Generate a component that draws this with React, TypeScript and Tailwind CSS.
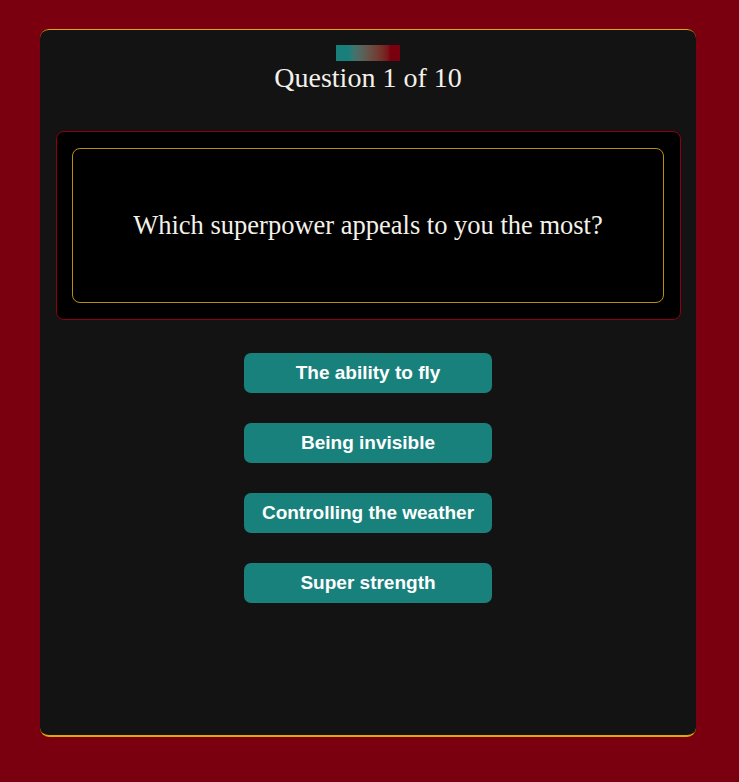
export default function App() {
  const answers = [
    'The ability to fly',
    'Being invisible',
    'Controlling the weather',
    'Super strength',
  ];

  return (
    <div className="min-h-[782px] w-full bg-[#7a0010] pt-[29px] pb-[45px] pl-[40px] pr-[43px]">
      <div className="h-[708px] rounded-[9px] border-t border-b-2 border-[#d9a90f] bg-[#131313] pl-[16px] pr-[15px] pt-[15px]">
        {/* progress + title */}
        <div className="flex flex-col items-center pr-[1px]">
          <div className="h-[16px] w-[64px] bg-gradient-to-r from-[#187f7a] from-20% to-[#7a0010] to-85%" />
          <h1
            className="mt-[1px] text-[28px] leading-[32px] text-[#f4f1ea]"
            style={{ fontFamily: '"Liberation Serif", "DejaVu Serif", serif' }}
          >
            Question 1 of 10
          </h1>
        </div>

        {/* question box */}
        <div className="mt-[37px] rounded-[8px] border border-[#8c0014] bg-black py-[16px] pl-[15px] pr-[16px]">
          <div className="flex h-[155px] items-center justify-center rounded-[8px] border border-[#b8900f]">
            <p
              className="text-[26.5px] text-[#f4f1ea]"
              style={{ fontFamily: '"Liberation Serif", "DejaVu Serif", serif' }}
            >
              Which superpower appeals to you the most?
            </p>
          </div>
        </div>

        {/* answers */}
        <div className="mt-[33px] flex flex-col items-center gap-[30px] pr-[1px]">
          {answers.map(a => (
            <button
              key={a}
              className="h-[40px] w-[248px] rounded-[7px] bg-[#19817c] text-[19px] font-bold text-white"
              style={{ fontFamily: '"Liberation Sans", Arial, sans-serif' }}
            >
              {a}
            </button>
          ))}
        </div>
      </div>
    </div>
  );
}
